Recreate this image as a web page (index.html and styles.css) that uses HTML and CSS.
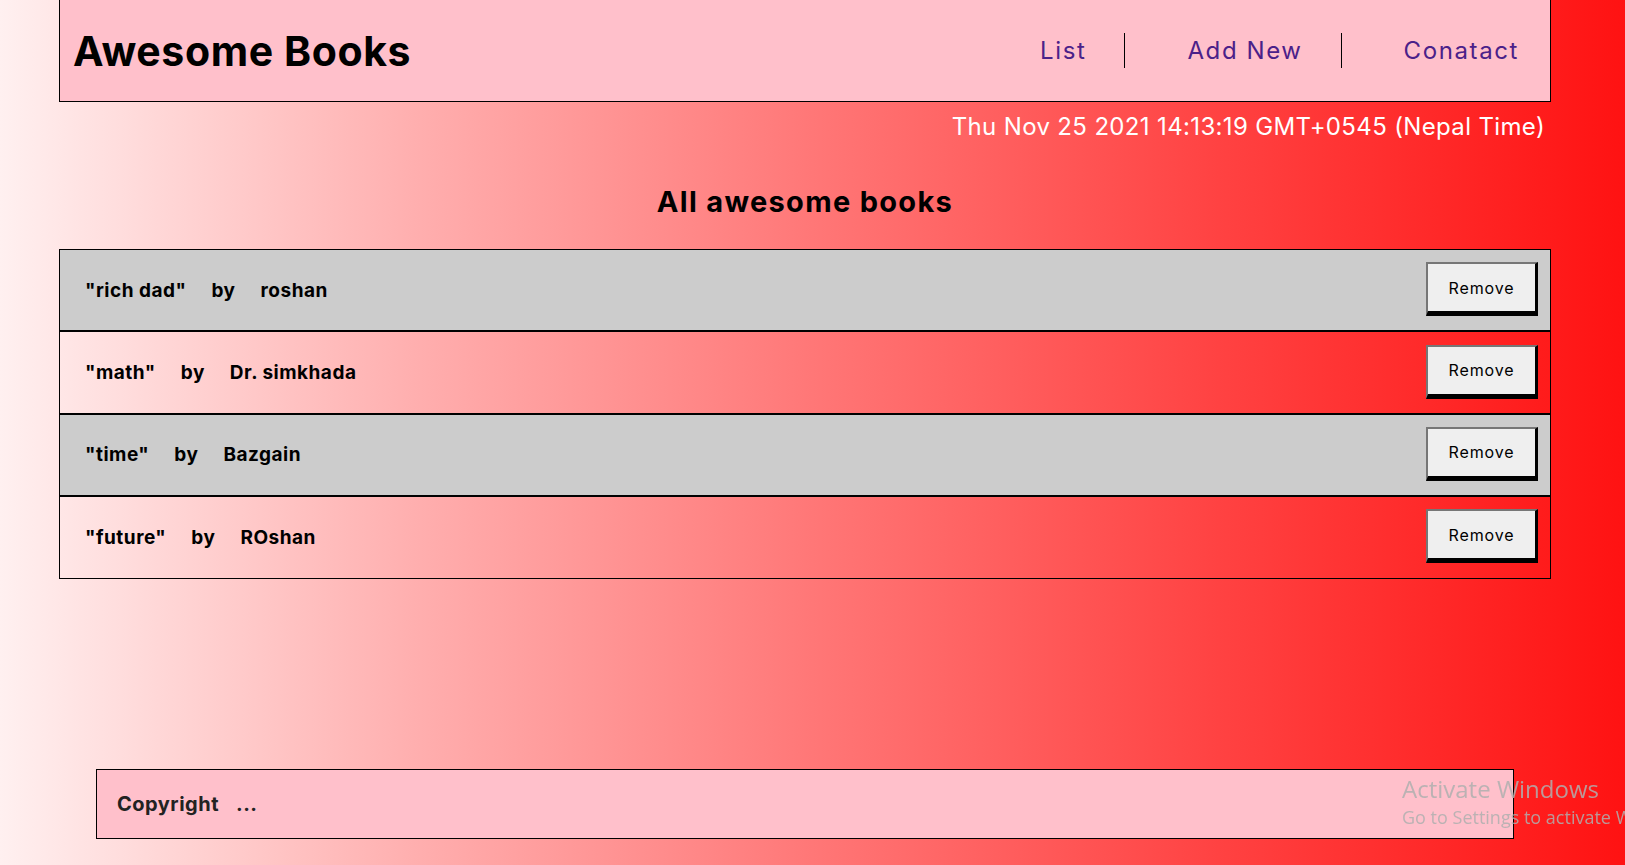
FILE: index.html
```html
<!DOCTYPE html>
<html lang="en">
<head>
<meta charset="utf-8">
<title>Awesome Books</title>
<link rel="stylesheet" href="styles.css">
</head>
<body>
  <div class="page">
    <header class="header">
      <h1 class="logo">Awesome Books</h1>
      <nav>
        <ul class="nav">
          <li class="nav-item"><a href="#">List</a></li>
          <li class="nav-item"><a href="#">Add New</a></li>
          <li class="nav-item"><a href="#">Conatact</a></li>
        </ul>
      </nav>
    </header>
    <p class="date">Thu Nov 25 2021 14:13:19 GMT+0545 (Nepal Time)</p>
    <h2 class="section-title">All awesome books</h2>
    <ul class="books">
      <li class="book odd">
        <div class="book-info"><span>"rich dad"</span><span>by</span><span>roshan</span></div>
        <button class="remove">Remove</button>
      </li>
      <li class="book">
        <div class="book-info"><span>"math"</span><span>by</span><span>Dr. simkhada</span></div>
        <button class="remove">Remove</button>
      </li>
      <li class="book odd">
        <div class="book-info"><span>"time"</span><span>by</span><span>Bazgain</span></div>
        <button class="remove">Remove</button>
      </li>
      <li class="book">
        <div class="book-info"><span>"future"</span><span>by</span><span>ROshan</span></div>
        <button class="remove">Remove</button>
      </li>
    </ul>
    <footer class="footer">
      <span>Copyright</span><span>...</span>
    </footer>
  </div>
  <div class="watermark">
    <div class="wm-title">Activate Windows</div>
    <div class="wm-sub">Go to Settings to activate Windows.</div>
  </div>
</body>
</html>
```

FILE: styles.css
```css
html, body {
  margin: 0;
  padding: 0;
}

body {
  min-height: 865px;
  overflow: hidden;
  font-family: "Inter", "Noto Sans", sans-serif;
  background: linear-gradient(90deg, #fff0f0 0%, #ffb0b0 25%, #ff7777 50%, #ff4242 75%, #ff1212 100%);
  padding-right: 15px;
  box-sizing: border-box;
}

.page {
  display: flex;
  flex-direction: column;
  align-items: center;
}

.header {
  width: 1492px;
  height: 102px;
  box-sizing: border-box;
  background: #ffc0cb;
  border: 1px solid #000;
  border-top: none;
  display: flex;
  align-items: center;
  justify-content: space-between;
  padding-left: 13px;
}

.logo {
  margin: 0;
  font-size: 41px;
  font-weight: 700;
  color: #000;
  letter-spacing: 0.6px;
}

.nav {
  list-style: none;
  margin: 0;
  padding: 0;
  display: flex;
  align-items: center;
}

.nav-item {
  padding: 0 38px 0 62px;
  height: 35px;
  display: flex;
  align-items: center;
  border-right: 1px solid #000;
}

.nav-item:last-child {
  border-right: none;
  padding-right: 31px;
}

.nav-item a {
  color: #4b2189;
  text-decoration: none;
  font-size: 24px;
  font-weight: 400;
  letter-spacing: 1.6px;
}

.date {
  width: 1492px;
  box-sizing: border-box;
  margin: 10px 0 0;
  padding-right: 6px;
  text-align: right;
  color: #fff;
  font-size: 24px;
  line-height: 30px;
  letter-spacing: 0.35px;
}

.section-title {
  margin: 42px 0 29px;
  font-size: 29px;
  line-height: 36px;
  font-weight: 700;
  color: #000;
  letter-spacing: 1.3px;
}

.books {
  list-style: none;
  margin: 0;
  padding: 0;
  width: 1492px;
}

.book {
  height: 82.4px;
  box-sizing: border-box;
  border: 1px solid #000;
  display: flex;
  align-items: center;
  justify-content: space-between;
  padding: 0 12px 0 25px;
}

.book.odd {
  background: #cccccc;
}

.book-info {
  display: flex;
  gap: 25px;
  font-size: 19px;
  font-weight: 700;
  color: #000;
  letter-spacing: 0.5px;
}

.remove {
  width: 112px;
  height: 54px;
  box-sizing: border-box;
  background: #efefef;
  border-style: solid;
  border-width: 2px 3px 5px 2px;
  border-color: #767676 #000 #000 #767676;
  font-family: "Inter", "Noto Sans", sans-serif;
  font-size: 16px;
  letter-spacing: 0.9px;
  color: #000;
  padding: 0;
  margin-top: -2px;
}

.footer {
  margin-top: 190px;
  width: 1418px;
  height: 70px;
  box-sizing: border-box;
  background: #ffc0cb;
  border: 1px solid #000;
  display: flex;
  align-items: center;
  gap: 17px;
  padding: 0 20px;
  font-size: 20px;
  font-weight: 700;
  color: #222;
  letter-spacing: 0.5px;
}

.watermark {
  position: fixed;
  left: 1402px;
  top: 773px;
  white-space: nowrap;
  color: rgba(175, 175, 175, 0.85);
  font-family: "Open Sans", "Noto Sans", sans-serif;
}

.wm-title {
  font-size: 24px;
  line-height: 32px;
}

.wm-sub {
  font-size: 18px;
  line-height: 24px;
}
```
